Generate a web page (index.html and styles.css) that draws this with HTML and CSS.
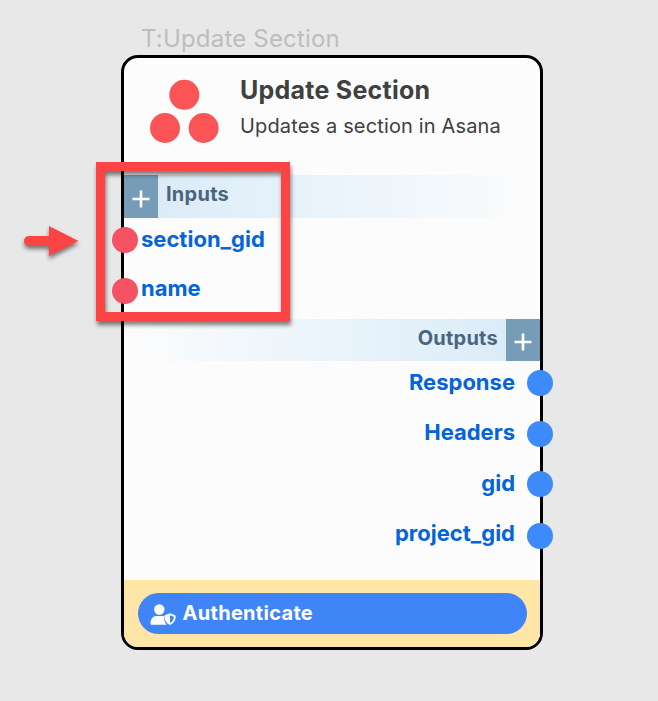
FILE: index.html
```html
<!DOCTYPE html>
<html lang="en">
<head>
<meta charset="utf-8">
<title>Update Section</title>
<link rel="stylesheet" href="styles.css">
</head>
<body>
<main class="canvas">
  <div class="node-label"><span>T:Update Section</span></div>
  <section class="card">
    <header class="head">
      <svg class="logo" viewBox="0 0 70 64" aria-hidden="true"><circle cx="35.3" cy="15.8" r="15"/><circle cx="16" cy="49" r="15"/><circle cx="54.6" cy="49" r="15"/></svg>
      <div class="head-text">
        <h1><span>Update Section</span></h1>
        <p><span>Updates a section in Asana</span></p>
      </div>
    </header>
    <div class="bar bar-in">
      <div class="plus"><svg viewBox="0 0 18 18"><path d="M9 .500v17M.500 9h17"/></svg></div>
      <span class="bar-name">Inputs</span>
    </div>
    <ul class="ports ins">
      <li><span>section_gid</span><i class="dot"></i></li>
      <li><span>name</span><i class="dot"></i></li>
    </ul>
    <div class="bar bar-out">
      <span class="bar-name">Outputs</span>
      <div class="plus"><svg viewBox="0 0 18 18"><path d="M9 .500v17M.500 9h17"/></svg></div>
    </div>
    <ul class="ports outs">
      <li><span>Response</span><i class="dot"></i></li>
      <li><span>Headers</span><i class="dot"></i></li>
      <li><span>gid</span><i class="dot"></i></li>
      <li><span>project_gid</span><i class="dot"></i></li>
    </ul>
    <footer class="foot">
      <button class="auth" type="button">
        <svg viewBox="0 0 26 22" aria-hidden="true">
          <circle cx="9.3" cy="5.5" r="5.2"/>
          <path d="M6.5 12h5.2c.9 0 1.700.1 2.300.4-.2 3.700.8 6.500 2.800 8.300H1.300C.8 20.700.5 20.300.5 19.700.5 15.300 2.800 12 6.500 12z"/>
          <path fill-rule="evenodd" d="M20 9.300l5.100 2c.4.200.6.500.6.900 0 4.200-1.900 7.200-5.700 8.700-3.800-1.500-5.700-4.500-5.700-8.700 0-.4.200-.7.600-.9zM20 11.200v7.800c2.500-1.200 3.800-3.200 3.900-6.200z"/>
        </svg>
        <span>Authenticate</span>
      </button>
    </footer>
  </section>
  <div class="highlight"></div>
  <svg class="arrow" viewBox="0 0 64 44" aria-hidden="true"><path d="M9 16h20V6l29.500 15L29 36V26H9a5 5 0 0 1 0-10z"/></svg>
</main>
</body>
</html>
```
FILE: styles.css
```css
* { box-sizing: border-box; }
body { margin: 0; background: #e8e8e8; font-family: Inter, sans-serif; }
.canvas { position: relative; width: 658px; height: 701px; padding: 22px 0 0 121px; overflow: hidden; }
.node-label { height: 33px; padding-left: 20px; font-size: 24px; line-height: 33px; letter-spacing: .18px; color: #bdbdbd; white-space: nowrap; }
.card { display: flex; flex-direction: column; width: 422px; height: 595px; border: 3px solid #000; border-radius: 17px; background: #fcfcfc; }
.head { display: flex; height: 117px; padding: 21px 0 0 25px; }
.logo { width: 70px; height: 64px; fill: #fb5457; }
.head-text { margin-left: 21px; white-space: nowrap; color: #404040; }
h1 { margin: -4px 0 0; font-size: 25px; line-height: 30px; font-weight: 700; letter-spacing: .25px; }
p { margin: 8px 0 0; font-size: 20px; line-height: 26px; letter-spacing: .15px; }
.bar { display: flex; flex: none; height: 43px; color: #4b6580; font-size: 20px; font-weight: 700; line-height: 38px; letter-spacing: .25px; }
.bar-in { background: linear-gradient(90deg, #d8eaf7, #e8f3fb 45%, #fcfcfc); }
.bar-out { height: 42px; margin-top: 1px; justify-content: flex-end; background: linear-gradient(90deg, #fcfcfc, #e8f3fb 55%, #d8eaf7); }
.plus { display: flex; width: 34px; padding: 15px 0 0 8px; background: #779cb8; }
.plus svg { width: 18px; height: 18px; fill: none; stroke: #fff; stroke-width: 2.6; }
.bar-out .plus { padding-top: 14px; }
.bar-name { padding: 0 8px; }
.ports { flex: none; list-style: none; margin: 0; padding: 0; color: #0564d9; font-size: 22px; font-weight: 700; line-height: 43px; }
.ports li { position: relative; display: flex; height: 50px; }
.ins li { padding-left: 17px; }
.ins li:first-child { height: 49px; }
.ins li:last-child { height: 51px; }
.outs { height: 219px; }
.outs li { height: 50.4px; justify-content: flex-end; padding-right: 25px; }
.dot { position: absolute; width: 26px; height: 26px; border-radius: 50%; }
.ins .dot { left: -12px; top: 9px; background: #f55264; }
.ins li:last-child .dot { top: 11px; }
.outs .dot { right: -13px; top: 9px; background: #3d8bfb; }
.outs li:nth-child(2) .dot { top: 10px; }
.outs li:nth-child(3) .dot { top: 9.600px; }
.outs li:nth-child(4) .dot { top: 10.400px; }
.foot { flex: 1; padding: 13px 13px 0 14px; background: #ffe6a7; border-radius: 0 0 14px 14px; }
.auth { display: flex; align-items: center; width: 389px; height: 41px; margin-left: -.5px; padding: 0 0 0 12px; border: 0; border-radius: 21px; background: #4085f8; color: #fff; font: 700 20px/38px Inter, sans-serif; letter-spacing: .3px; }
.auth svg { width: 26px; height: 22px; margin: 2px 6px 0 0; fill: #fff; }
.auth span { position: relative; top: -1px; left: 1px; }
.highlight { position: absolute; left: 96px; top: 162px; width: 194px; height: 159px; border: 9px solid #fd4444; filter: drop-shadow(1px 4px 2px rgba(0,0,0,.5)); }
.arrow { position: absolute; left: 20px; top: 220px; width: 64px; height: 44px; overflow: visible; fill: #fd4444; filter: drop-shadow(0 3px 2px rgba(0,0,0,.5)); }
```
